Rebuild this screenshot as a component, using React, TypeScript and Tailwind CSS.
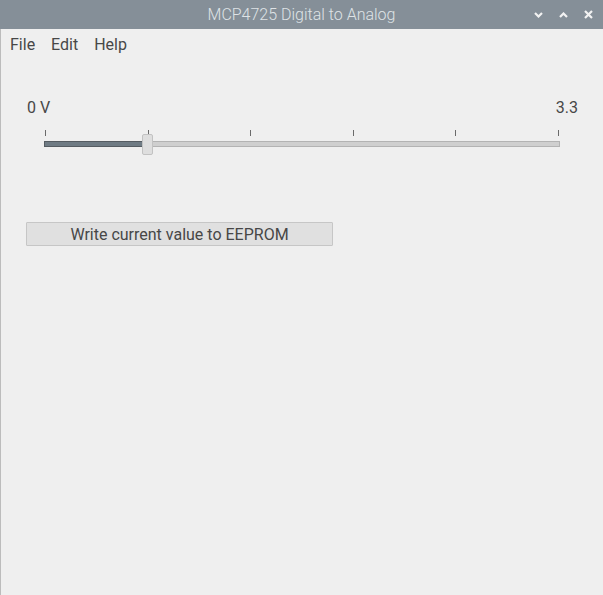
import React from "react";

const TICKS = [0, 1, 2, 3, 4, 5];

export default function App() {
    return (
        <div className="w-[603px] h-[595px] bg-[#efefef] flex flex-col font-['Roboto','Liberation_Sans',sans-serif] text-[16px] text-[#474747]">
            {/* title bar */}
            <div className="h-[29px] shrink-0 bg-[#858f98] grid grid-cols-[1fr_auto_1fr] items-center">
                <div />
                <span className="font-light text-[#dfe3e6] leading-[19px]">MCP4725 Digital to Analog</span>
                <div className="flex items-center justify-end gap-[16px] pr-[10px]">
                    <svg width="9" height="6" viewBox="0 0 9 6" className="mt-[1px]">
                        <path d="M1 1l3.5 3.5L8 1" stroke="#f2f2f2" strokeWidth="2.2" fill="none" />
                    </svg>
                    <svg width="9" height="6" viewBox="0 0 9 6" className="mt-[1px]">
                        <path d="M1 5l3.5-3.5L8 5" stroke="#f2f2f2" strokeWidth="2.2" fill="none" />
                    </svg>
                    <svg width="9" height="9" viewBox="0 0 9 9">
                        <path d="M1 1l7 7M8 1l-7 7" stroke="#f2f2f2" strokeWidth="2.2" fill="none" />
                    </svg>
                </div>
            </div>

            <div className="flex-1 border-l border-[#bcbcbc] flex flex-col">
                {/* menu */}
                <div className="h-[30px] flex items-center gap-[16px] pl-[9px] leading-[19px]">
                    <span>File</span>
                    <span>Edit</span>
                    <span>Help</span>
                </div>

                {/* labels */}
                <div className="mt-[39px] ml-[26px] mr-[25px] flex justify-between leading-[19px]">
                    <span>0 V</span>
                    <span>3.3</span>
                </div>

                {/* slider */}
                <div className="ml-[43px] w-[516px] mt-[13px]">
                    <div className="flex justify-between px-[1px] h-[6px]">
                        {TICKS.map((t) => (
                            <div key={t} className="w-[1px] h-full bg-[#6a6a6a]" />
                        ))}
                    </div>
                    <div className="relative mt-[5px] h-[6px] border border-[#b3b3b3] bg-[#cfcfcf]">
                        <div className="absolute -left-[1px] -top-[1px] h-[6px] w-[101px] border border-[#555c62] bg-[#6f7b84]" />
                        <div className="absolute left-[97px] -top-[8px] h-[21px] w-[11px] rounded-[2px] border border-[#c2c2c2] bg-[#dedede]" />
                    </div>
                </div>

                {/* button */}
                <div className="mt-[75px] ml-[25px]">
                    <button className="w-[307px] h-[24px] pt-[1px] border border-[#c6c6c6] bg-[#e0e0e0] leading-[19px] rounded-[1px]">
                        Write current value to EEPROM
                    </button>
                </div>
            </div>
        </div>
    );
}
